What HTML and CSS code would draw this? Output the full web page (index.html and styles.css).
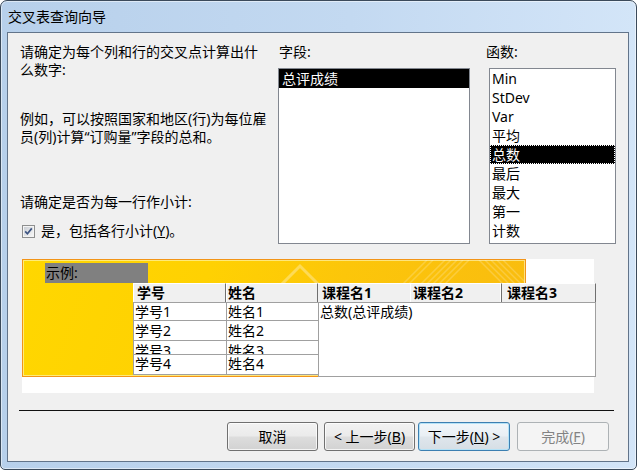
FILE: index.html
```html
<!DOCTYPE html>
<html lang="zh-CN">
<head>
<meta charset="utf-8">
<title>交叉表查询向导</title>
<link rel="stylesheet" href="styles.css">
</head>
<body>
<div class="window">
  <div class="titlebar">交叉表查询向导</div>
  <div class="client">
    <div class="top">
      <div class="intro">
        <p class="para">请确定为每个列和行的交叉点计算出什<br>么数字:</p>
        <p class="para p2">例如，可以按照国家和地区(行)为每位雇<br>员(列)计算“订购量”字段的总和。</p>
        <p class="para p3">请确定是否为每一行作小计:</p>
        <div class="check">
          <svg class="cb" width="13" height="13" viewBox="0 0 13 13">
            <defs>
              <linearGradient id="cbg" x1="0" y1="0" x2="1" y2="1">
                <stop offset="0" stop-color="#cbcfd5"/>
                <stop offset="1" stop-color="#f6f6f6"/>
              </linearGradient>
            </defs>
            <rect x="0.5" y="0.5" width="12" height="12" fill="#f4f4f4" stroke="#8e8f8f"/>
            <rect x="2" y="2" width="9" height="9" fill="url(#cbg)"/>
            <path d="M3.2 6.4 L5.4 8.8 L9.8 3.4" fill="none" stroke="#3d5482" stroke-width="1.7"/>
          </svg>
          <span>是，包括各行小计(<u>Y</u>)。</span>
        </div>
      </div>
      <div class="field-col">
        <div class="label">字段:</div>
        <div class="listbox field-list">
          <div class="item selected">总评成绩</div>
        </div>
      </div>
      <div class="func-col">
        <div class="label">函数:</div>
        <div class="listbox func-list">
          <div class="item">Min</div>
          <div class="item">StDev</div>
          <div class="item">Var</div>
          <div class="item">平均</div>
          <div class="item selected focused">总数</div>
          <div class="item">最后</div>
          <div class="item">最大</div>
          <div class="item">第一</div>
          <div class="item">计数</div>
        </div>
      </div>
    </div>

    <div class="sample">
      <div class="banner">
        <svg class="deco" width="502" height="116" viewBox="0 0 502 116">
          <path d="M259 24 L277 6 L295 24" fill="none" stroke="#fff" stroke-opacity=".32" stroke-width="3"/>
          <g stroke="#fff" stroke-opacity=".2" stroke-width="1.5" fill="none">
            <path d="M380 24 L404 0 M386 24 L410 0 M398 24 L422 0 M404 24 L428 0 M410 24 L434 0 M416 24 L440 0 M422 24 L446 0"/>
            <path d="M456 0 L480 24 M462 0 L486 24 M468 0 L492 24 M474 0 L498 24 M480 0 L504 24"/>
          </g>
        </svg>
        <div class="sample-label">示例:</div>
        <div class="grid">
          <div class="gl">
            <div class="ghead">
              <div class="hc hc-id">学号</div>
              <div class="hc hc-name">姓名</div>
            </div>
            <div class="gbody">
              <div class="grow r1"><div class="dc dc-id">学号1</div><div class="dc dc-name">姓名1</div></div>
              <div class="grow r2"><div class="dc dc-id">学号2</div><div class="dc dc-name">姓名2</div></div>
              <div class="grow r3"><div class="dc dc-id">学号3</div><div class="dc dc-name">姓名3</div></div>
              <div class="grow r4"><div class="dc dc-id">学号4</div><div class="dc dc-name">姓名4</div></div>
            </div>
          </div>
          <div class="gr">
            <div class="ghead">
              <div class="hc hc-c1">课程名1</div>
              <div class="hc hc-c2">课程名2</div>
              <div class="hc hc-c3">课程名3</div>
            </div>
            <div class="rbody">总数(总评成绩)</div>
          </div>
        </div>
      </div>
    </div>

    <div class="separator"></div>

    <div class="buttons">
      <button type="button" class="btn">取消</button>
      <button type="button" class="btn btn-prev">&lt; 上一步(<u>B</u>)</button>
      <button type="button" class="btn btn-next btn-default">下一步(<u>N</u>) &gt;</button>
      <button type="button" class="btn btn-finish btn-disabled">完成(<u>F</u>)</button>
    </div>
  </div>
</div>
</body>
</html>
```

FILE: styles.css
```css
* { box-sizing: border-box; }
html, body { margin: 0; padding: 0; }
body {
  background: #ffffff;
  font-family: "Noto Sans", "Noto Sans CJK SC", sans-serif;
  font-size: 14px;
  color: #000;
}

.window {
  width: 637px;
  height: 470px;
  border: 1px solid #3b4a5b;
  border-radius: 7px 7px 5px 5px;
  background: linear-gradient(90deg, #b7d0eb 0%, #c3d9f1 55%, #d3e5f8 100%);
  box-shadow: inset 0 0 0 1px rgba(255, 255, 255, 0.5);
  display: flex;
  flex-direction: column;
  overflow: hidden;
}

.titlebar {
  height: 31px;
  flex: none;
  padding: 1px 0 0 7px;
  line-height: 30px;
  white-space: nowrap;
}

.client {
  flex: 1;
  margin: 0 7px 7px 6px;
  border: 1px solid #62748a;
  background: #f0f0f0;
  display: flex;
  flex-direction: column;
}

/* top section */
.top {
  display: flex;
  flex: none;
  height: 211px;
  padding: 10px 0 0 12px;
}

.intro {
  width: 258px;
  flex: none;
  white-space: nowrap;
  line-height: 18px;
}
.para { margin: 0; }
.p2 { margin-top: 31px; }
.p3 { margin-top: 47px; }

.check {
  display: flex;
  align-items: center;
  height: 18px;
  margin-top: 11px;
  padding-left: 2px;
}
.cb { flex: none; margin-right: 6px; }

.label { line-height: 18px; margin-bottom: 7px; white-space: nowrap; }

.field-col { width: 192px; flex: none; }
.field-col .label { padding-left: 1px; }

.listbox {
  height: 176px;
  border: 1px solid #828790;
  background: #fff;
}
.field-list { width: 192px; }

.func-col { margin-left: 16px; width: 132px; flex: none; }
.func-list { margin-left: 3px; width: 127px; }

.item {
  height: 19px;
  line-height: 19px;
  padding-left: 3px;
  white-space: nowrap;
}
.func-list .item { padding-left: 2px; }
.item.selected { background: #000; color: #fff; }
.item.focused { outline: 1px dotted #fff; outline-offset: -1px; }

/* sample */
.sample {
  flex: none;
  margin: 15px 0 0 14px;
  width: 572px;
  height: 134px;
  background: #fff;
}

.banner {
  position: relative;
  width: 504px;
  height: 118px;
  border: 1px solid #f29418;
  background: linear-gradient(110deg, #ffd700 0%, #ffd102 35%, #fcc60a 60%, #f9bb10 100%);
  box-shadow: inset 0 0 0 1px rgba(255, 250, 200, 0.6);
}

.deco { position: absolute; left: 0; top: 0; }

.sample-label {
  position: relative;
  margin: 3px 0 0 22px;
  width: 103px;
  height: 20px;
  line-height: 20px;
  padding-left: 1px;
  background: #808080;
  color: #000;
}

.grid {
  position: relative;
  display: flex;
  align-items: flex-start;
  margin-left: 110px;
  width: 463px;
}

.gl { width: 185px; flex: none; }
.gr { width: 278px; flex: none; }

.ghead { display: flex; height: 19px; }

.hc {
  height: 19px;
  background: #f0f0f0;
  border-top: 1px solid #fff;
  font-weight: 700;
  line-height: 18px;
  white-space: nowrap;
  overflow: hidden;
}
.hc-id { width: 93px; border-left: 1px solid #fff; border-right: 1px solid #6f6f6f; padding-left: 3px; }
.hc-name { width: 92px; border-left: 1px solid #fff; border-right: 1px solid #6f6f6f; padding-left: 1px; }
.hc-c1 { width: 92px; padding-left: 4px; }
.hc-c2 { width: 91px; border-left: 1px solid #fff; border-right: 1px solid #fff; padding-left: 2px; }
.hc-c3 { width: 95px; border-left: 1px solid #6f6f6f; border-right: 1px solid #6f6f6f; padding-left: 5px; }

.gbody {
  border-top: 1px solid #a0a0a0;
  border-left: 1px solid #a0a0a0;
  background: #fff;
}
.grow {
  display: flex;
  border-bottom: 1px solid #a0a0a0;
  overflow: hidden;
}
.r1 { height: 18px; }
.r2 { height: 20px; }
.r3 { height: 14px; }
.r4 { height: 20px; }

.dc {
  line-height: 18px;
  white-space: nowrap;
  padding-left: 1px;
  overflow: hidden;
}
.dc-id { width: 93px; border-right: 1px solid #a0a0a0; }
.dc-name { width: 91px; }
.r2 .dc { padding-top: 1px; }
.r3 .dc { padding-top: 1px; }

.rbody {
  height: 75px;
  border: 1px solid #a0a0a0;
  background: #fff;
  line-height: 18px;
  padding-left: 1px;
  white-space: nowrap;
}

/* bottom */
.separator {
  flex: none;
  margin: 17px 0 0 11px;
  width: 595px;
  height: 1px;
  background: #111;
}

.buttons {
  flex: none;
  display: flex;
  justify-content: flex-end;
  margin-top: 11px;
  padding-right: 19px;
}

.btn {
  font: inherit;
  color: #000;
  width: 91px;
  height: 29px;
  padding: 0;
  border: 1px solid #707070;
  border-radius: 3px;
  background: linear-gradient(#f2f2f2 0%, #ebebeb 48%, #dddddd 52%, #d2d2d2 100%);
  box-shadow: inset 0 0 0 1px rgba(255, 255, 255, 0.75);
  line-height: 27px;
  text-align: center;
  white-space: nowrap;
}
.btn u { text-decoration: underline; }
.btn-prev { margin-left: 6px; }
.btn-next { margin-left: 3px; width: 92px; }
.btn-finish { margin-left: 7px; width: 92px; }

.btn-default {
  border-color: #3c7fb1;
  background: linear-gradient(#f1f6fa 0%, #e9eff4 48%, #dfe6ec 52%, #d6dee5 100%);
  box-shadow: inset 0 0 0 1px #b4e2f7;
}

.btn-disabled {
  border-color: #adb2b5;
  background: #f4f4f4;
  box-shadow: none;
  color: #838383;
}
```
